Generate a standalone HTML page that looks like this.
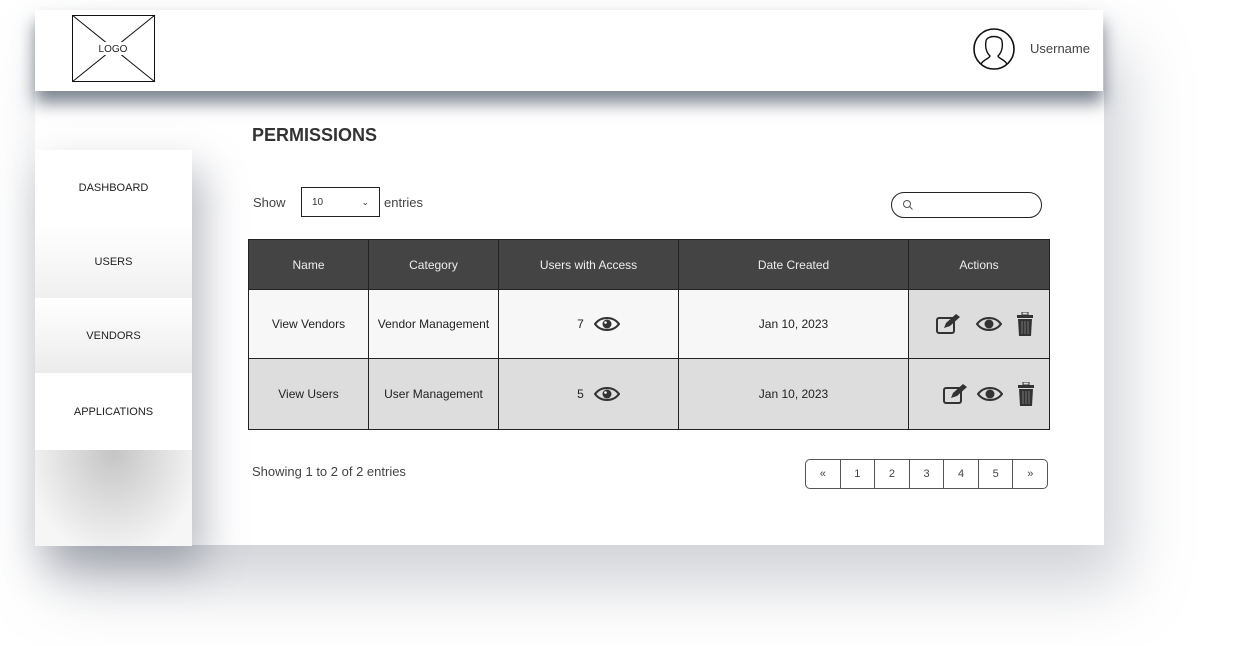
<!DOCTYPE html>
<html><head><style>
body{margin:0;width:1243px;height:646px;background:#fff;position:relative;overflow:hidden;font-family:"Liberation Sans",sans-serif;color:#333}
.abs{position:absolute}
.main{left:35px;top:10px;width:1069px;height:535px;background:#fff;box-shadow:20px 40px 60px rgba(120,125,140,.35)}
.hdr{left:35px;top:10px;width:1068px;height:81px;background:#fff;box-shadow:0 12px 16px rgba(70,80,95,.7)}
.nav{left:35px;width:157px;display:flex;align-items:center;justify-content:center;font-size:11px;color:#222}
table{border-collapse:collapse;font-size:12px;color:#222;table-layout:fixed}
td,th{border:1px solid #222;text-align:center;padding:0}
th{background:#444;color:#eee;font-weight:normal;height:49px;border-color:#222}
.f{display:flex;align-items:center;justify-content:center;gap:10px}
.pg{left:805px;top:459px;width:243px;height:30px;box-sizing:border-box;display:flex;border:1px solid #555;border-radius:5px;overflow:hidden}
.pg div{flex:1;border-right:1px solid #555;display:flex;align-items:center;justify-content:center;font-size:11px;color:#444}
.pg div:last-child{border-right:none}
</style></head><body>
<div class="abs main"></div>
<div class="abs" style="left:35px;top:150px;width:157px;height:396px;box-shadow:10px 20px 40px rgba(90,95,110,.45)"></div>
<div class="abs nav" style="top:150px;height:75px;background:#fff">DASHBOARD</div>
<div class="abs nav" style="top:225px;height:73px;background:linear-gradient(#fff,#f0f0f0)">USERS</div>
<div class="abs nav" style="top:298px;height:75px;background:linear-gradient(#fff,#ececec)">VENDORS</div>
<div class="abs nav" style="top:373px;height:77px;background:#fff">APPLICATIONS</div>
<div class="abs" style="left:35px;top:450px;width:157px;height:96px;background:radial-gradient(ellipse at 50% 0%,#c4c4c4,#f6f6f6 80%)"></div>
<div class="abs hdr"></div>
<svg class="abs" style="left:72px;top:15px" width="84" height="67"><rect x="0.5" y="0.5" width="82" height="66" fill="#fff" stroke="#111"/><line x1="0" y1="0" x2="83" y2="67" stroke="#111"/><line x1="83" y1="0" x2="0" y2="67" stroke="#111"/><rect x="24" y="27" width="34" height="13" fill="#fff"/><text x="41" y="37" font-size="10" text-anchor="middle" font-family="Liberation Sans" fill="#222">LOGO</text></svg>
<svg class="abs" style="left:972px;top:28px" width="44" height="44"><circle cx="22" cy="21" r="20" fill="#fff" stroke="#111" stroke-width="1.6"/><path d="M9 36 C12 31 17 31 18 28 C14 24 13 19 14 13 C15 7 29 7 30 13 C31 19 30 24 26 28 C27 31 32 31 35 36" fill="none" stroke="#111" stroke-width="1.4"/></svg>
<div class="abs" style="left:1030px;top:41px;font-size:13px;color:#444">Username</div>
<div class="abs" style="left:252px;top:125px;font-size:18px;font-weight:bold;color:#333">PERMISSIONS</div>
<div class="abs" style="left:253px;top:195px;font-size:13px;color:#444">Show</div>
<div class="abs" style="left:301px;top:187px;width:79px;height:30px;border:1px solid #222;font-size:10px;line-height:30px;padding-left:10px;box-sizing:border-box">10<span style="position:absolute;right:10px;top:-1px;font-size:9px">&#8964;</span></div>
<div class="abs" style="left:384px;top:195px;font-size:13px;color:#444">entries</div>
<div class="abs" style="left:891px;top:192px;width:151px;height:26px;border:1px solid #222;border-radius:13px;box-sizing:border-box"><svg style="position:absolute;left:10px;top:6px" width="12" height="12"><circle cx="5" cy="5" r="3.5" fill="none" stroke="#555"/><line x1="7.5" y1="7.5" x2="10.5" y2="10.5" stroke="#555"/></svg></div>
<table class="abs" style="left:248px;top:239px;width:801px">
<colgroup><col style="width:120px"><col style="width:130px"><col style="width:180px"><col style="width:230px"><col style="width:141px"></colgroup>
<tr><th>Name</th><th>Category</th><th>Users with Access</th><th>Date Created</th><th>Actions</th></tr>
<tr style="height:69px;background:#f7f7f7"><td>View Vendors</td><td>Vendor Management</td><td><div class="f" style="padding-left:20px">7 <svg width="26" height="16"><path d="M1 8 C7 0 19 0 25 8 C19 16 7 16 1 8Z" fill="none" stroke="#333" stroke-width="2"/><circle cx="13" cy="8" r="4.5" fill="#333"/><circle cx="11.5" cy="6.5" r="1.3" fill="#fff"/></svg></div></td><td>Jan 10, 2023</td><td style="background:#ddd"><div class="f" style="gap:14px;padding-left:12px">
<svg width="26" height="22"><rect x="1" y="5" width="17" height="15" rx="2" fill="none" stroke="#333" stroke-width="2"/><path d="M8 15 L10 10 L20 1 L24 4 L14 13Z" fill="#333"/></svg>
<svg width="26" height="16"><path d="M1 8 C7 0 19 0 25 8 C19 16 7 16 1 8Z" fill="none" stroke="#333" stroke-width="2"/><circle cx="13" cy="8" r="4.5" fill="#333"/></svg>
<svg width="18" height="24"><rect x="6" y="0" width="6" height="3" fill="none" stroke="#333"/><rect x="1" y="3" width="16" height="3" fill="#333"/><path d="M2 7 H16 L15 24 H3Z" fill="#333"/><path d="M6 9 V22 M9 9 V22 M12 9 V22" stroke="#777"/></svg></div></td></tr>
<tr style="height:71px;background:#ddd"><td>View Users</td><td>User Management</td><td><div class="f" style="padding-left:20px">5 <svg width="26" height="16"><path d="M1 8 C7 0 19 0 25 8 C19 16 7 16 1 8Z" fill="none" stroke="#333" stroke-width="2"/><circle cx="13" cy="8" r="4.5" fill="#333"/><circle cx="11.5" cy="6.5" r="1.3" fill="#fff"/></svg></div></td><td>Jan 10, 2023</td><td><div class="f" style="gap:8px;padding-left:20px">
<svg width="26" height="22"><rect x="1" y="5" width="17" height="15" rx="2" fill="none" stroke="#333" stroke-width="2"/><path d="M8 15 L10 10 L20 1 L24 4 L14 13Z" fill="#333"/></svg>
<svg width="26" height="16"><path d="M1 8 C7 0 19 0 25 8 C19 16 7 16 1 8Z" fill="none" stroke="#333" stroke-width="2"/><circle cx="13" cy="8" r="4.5" fill="#333"/></svg>
<svg width="18" height="24" style="margin-left:6px"><rect x="6" y="0" width="6" height="3" fill="none" stroke="#333"/><rect x="1" y="3" width="16" height="3" fill="#333"/><path d="M2 7 H16 L15 24 H3Z" fill="#333"/><path d="M6 9 V22 M9 9 V22 M12 9 V22" stroke="#777"/></svg></div></td></tr>
</table>
<div class="abs" style="left:252px;top:464px;font-size:13px;color:#444">Showing 1 to 2 of 2 entries</div>
<div class="abs pg"><div>&laquo;</div><div>1</div><div>2</div><div>3</div><div>4</div><div>5</div><div>&raquo;</div></div>
</body></html>
